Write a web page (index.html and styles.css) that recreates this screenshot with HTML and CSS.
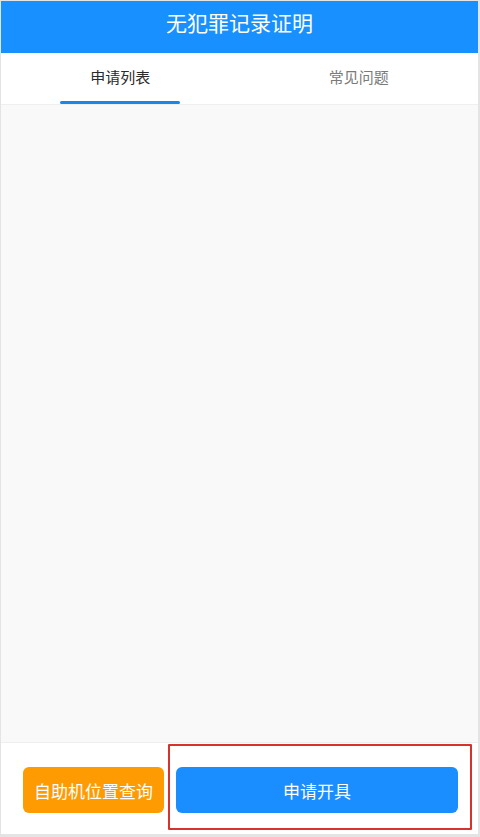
FILE: index.html
```html
<!DOCTYPE html>
<html lang="zh-CN">
<head>
  <meta charset="UTF-8" />
  <title>无犯罪记录证明</title>
  <link rel="stylesheet" href="styles.css">
</head>
<body>

  <div class="page">
    <header class="titlebar">无犯罪记录证明</header>

    <nav class="tabs">
      <div class="tab active">申请列表</div>
      <div class="tab">常见问题</div>
    </nav>

    <main class="lista"></main>

    <footer class="acciones">
      <button class="btn btn-naranja">自助机位置查询</button>
      <button class="btn btn-azul">申请开具</button>
      <div class="marca"></div>
    </footer>
  </div>

</body>
</html>
```

FILE: styles.css
```css
/* Base */
html, body {
  margin: 0;
  height: 100%;
}

body {
  font-family: "Noto Sans CJK SC", "Noto Sans", sans-serif;
  background-color: #e6e6e6;
}

/* Marco de la pantalla */
.page {
  box-sizing: border-box;
  height: 837px;
  border-style: solid;
  border-color: #e4e4e4;
  border-width: 1px 2px 3px 1px;
  display: flex;
  flex-direction: column;
  background-color: #fff;
}

.titlebar {
  height: 52px;
  line-height: 42px;
  background-color: #1890ff;
  color: #fff;
  text-align: center;
  font-size: 21px;
}

/* Pestañas */
.tabs {
  display: flex;
  height: 52px;
  background-color: #fff;
  border-bottom: 1px solid #efefef;
  box-sizing: border-box;
}

.tab {
  flex: 1;
  position: relative;
  text-align: center;
  line-height: 48px;
  font-size: 15px;
  color: #7a7a7a;
}

.tab.active {
  color: #2b2b2b;
}

.tab.active::after {
  content: "";
  position: absolute;
  left: 59px;
  bottom: 0;
  width: 120px;
  height: 3px;
  border-radius: 2px;
  background-color: #1a86ea;
}

.lista {
  flex: 1;
  background-color: #f9f9f9;
}

/* Botones inferiores */
.acciones {
  position: relative;
  height: 92px;
  box-sizing: border-box;
  padding: 24px 20px 22px 22px;
  display: grid;
  grid-template-columns: 141px 1fr;
  gap: 12px;
  background-color: #fff;
  border-top: 1px solid #eeeeee;
}

.btn {
  border: none;
  border-radius: 6px;
  color: #fff;
  font-family: inherit;
  font-size: 17px;
  height: 46px;
  cursor: pointer;
}

.btn-naranja {
  background-color: #fe9b02;
}

.btn-azul {
  background-color: #1a8dff;
}

/* recuadro rojo de resaltado */
.marca {
  position: absolute;
  left: 167px;
  top: 1px;
  width: 304px;
  height: 86px;
  box-sizing: border-box;
  border: 2px solid #d8322c;
  border-radius: 1px;
}
```
